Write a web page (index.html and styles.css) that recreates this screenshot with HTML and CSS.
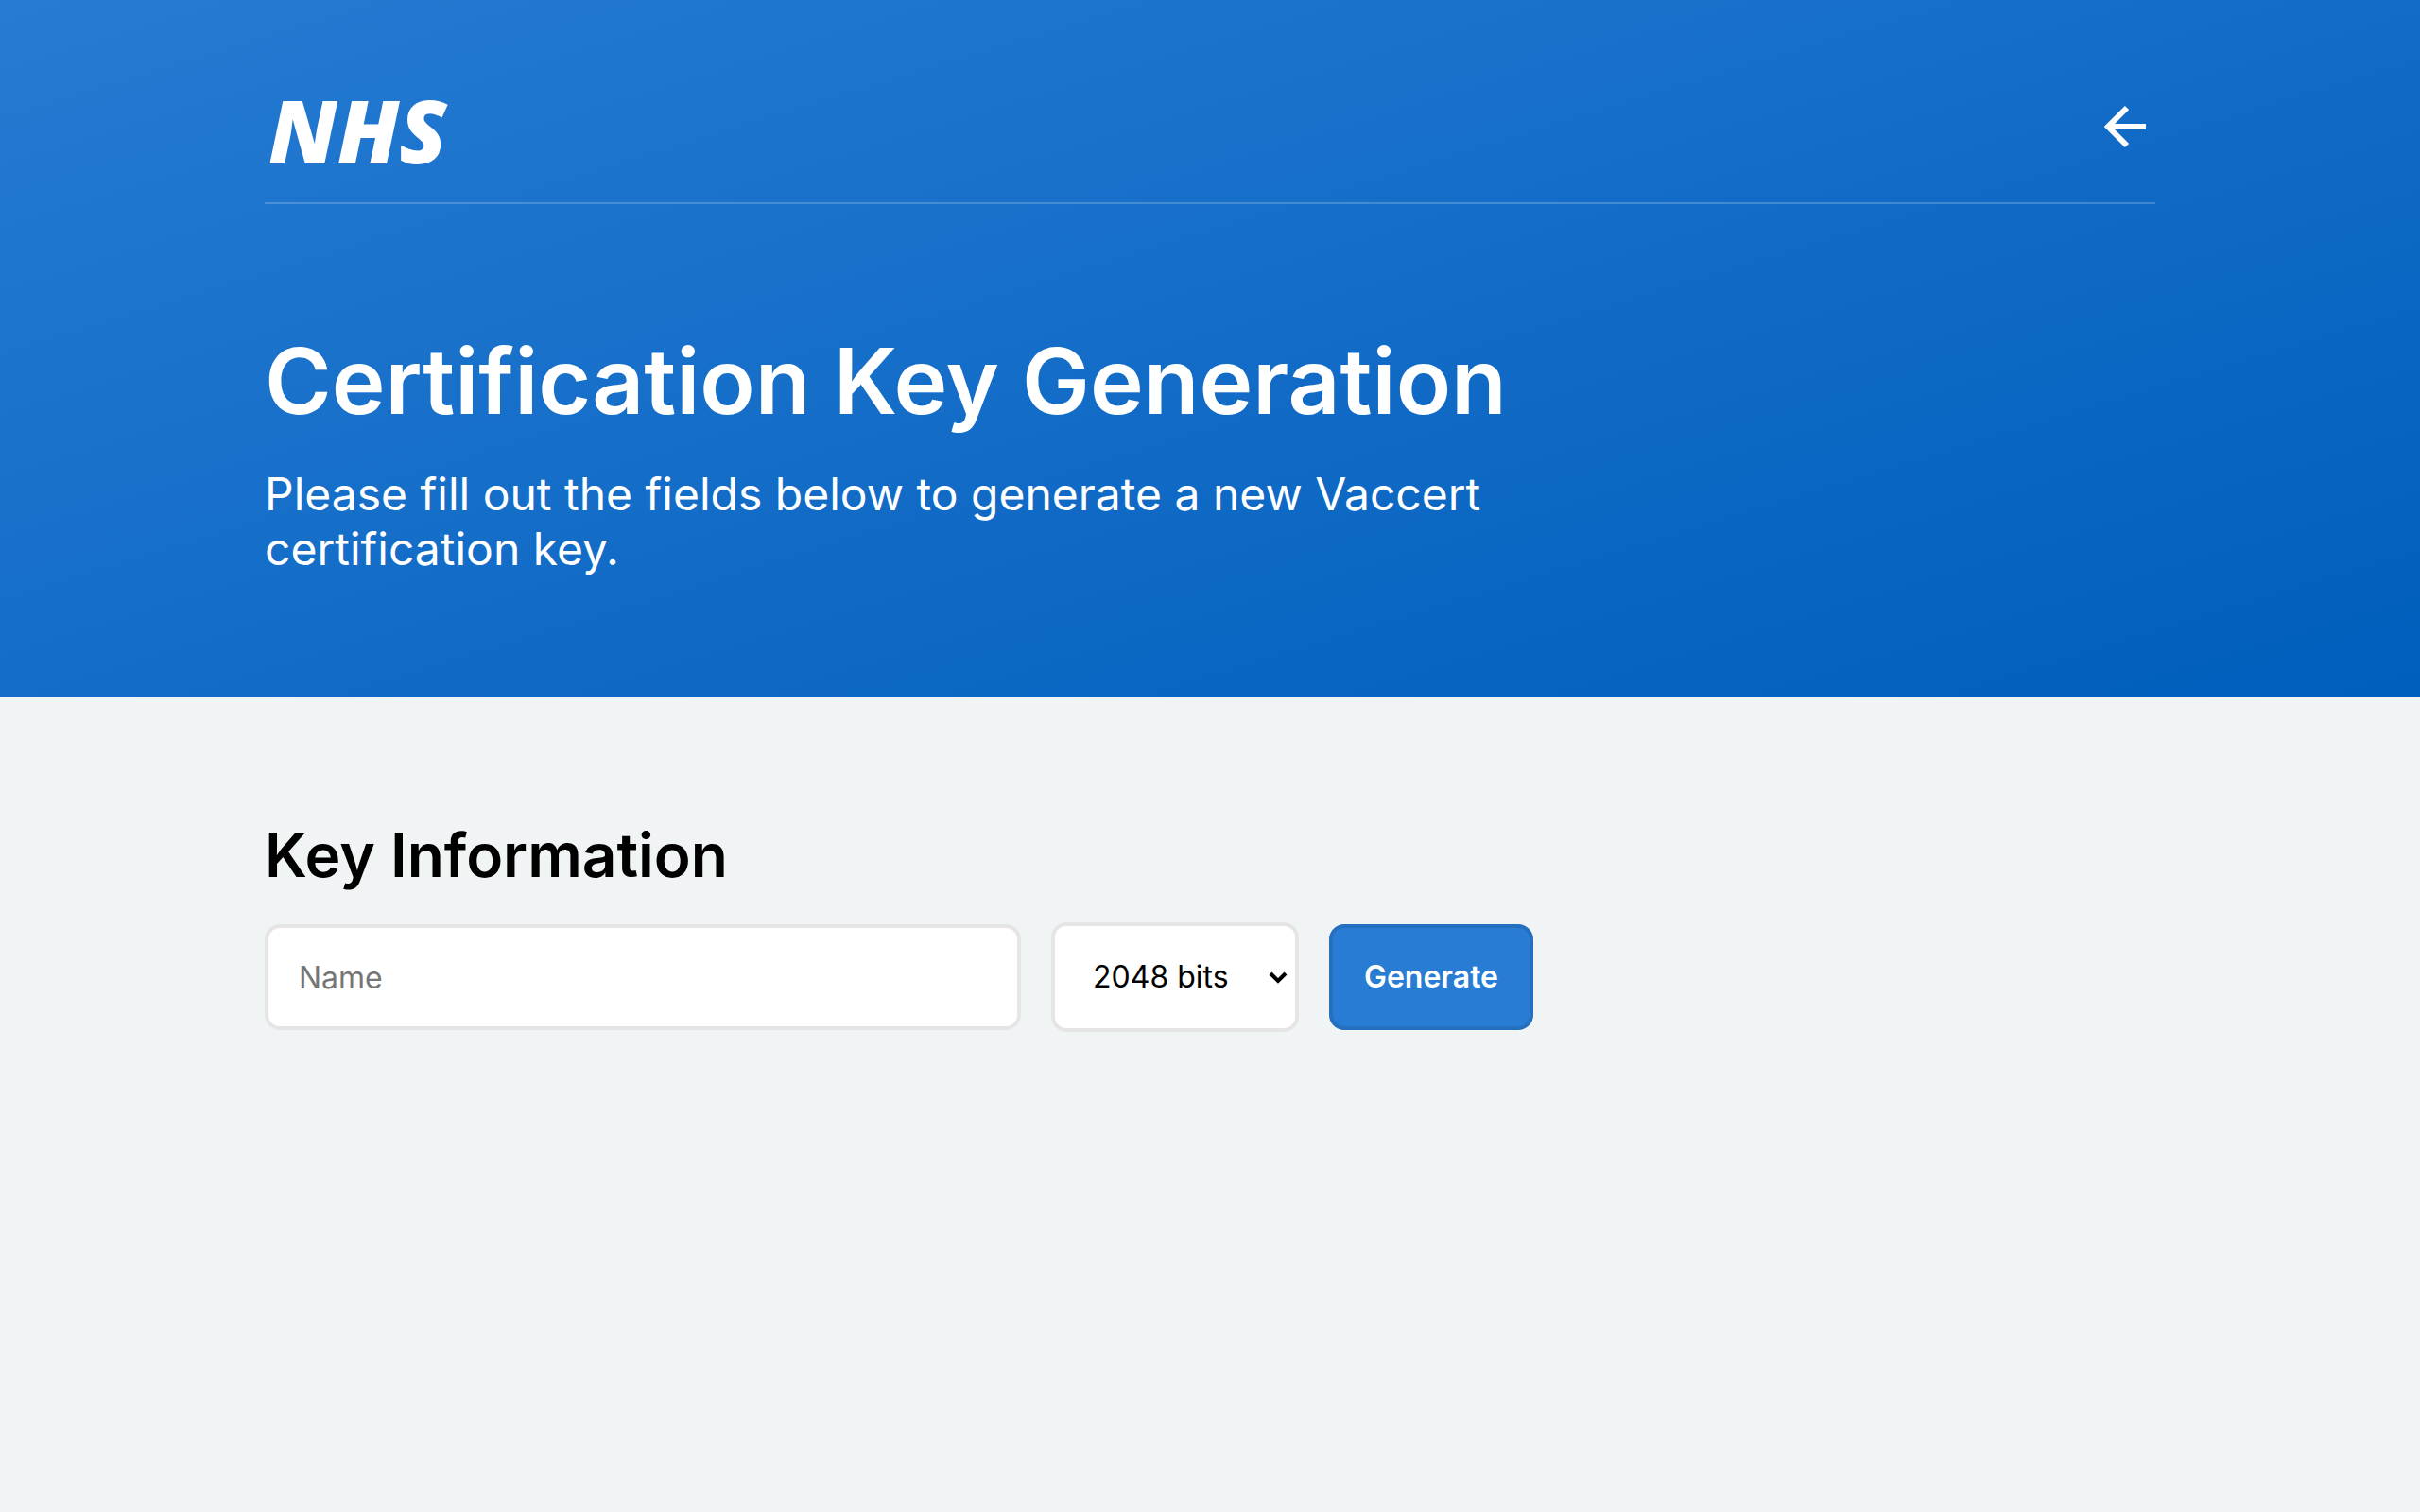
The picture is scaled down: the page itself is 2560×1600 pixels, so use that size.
FILE: index.html
```html
<!DOCTYPE html>
<html lang="en">
<head>
<meta charset="utf-8">
<meta name="viewport" content="width=device-width, initial-scale=1">
<title>Certification Key Generation</title>
<link rel="stylesheet" href="styles.css">
</head>
<body>
<header class="hero">
  <div class="container">
    <nav class="navbar">
      <a class="logo" href="#">NHS</a>
      <a class="back" href="#" aria-label="Back">
        <svg class="back-icon" viewBox="0 0 64 64" aria-hidden="true">
          <path d="M54 32H14M34 12L14 32L34 52"/>
        </svg>
      </a>
    </nav>
    <div class="intro">
      <h1 class="title">Certification Key Generation</h1>
      <p class="lead">Please fill out the fields below to generate a new Vaccert certification key.</p>
    </div>
  </div>
</header>
<main class="container content">
  <h2 class="section-title">Key Information</h2>
  <form class="key-form">
    <input class="field name-field" type="text" placeholder="Name" aria-label="Name">
    <select class="field size-field" aria-label="Key size">
      <option>2048 bits</option>
      <option>4096 bits</option>
    </select>
    <button class="submit" type="button">Generate</button>
  </form>
</main>
</body>
</html>
```

FILE: styles.css
```css
* {
  box-sizing: border-box;
}

body {
  margin: 0;
  background: #f0f4f5;
  color: #000;
  font-family: Inter, sans-serif;
}

.container {
  max-width: 2000px;
  margin: 0 auto;
}

.hero {
  padding: 80px 0 128px;
  background: linear-gradient(163deg, #267bd2, #005ebc);
  color: #fff;
}

.navbar {
  display: flex;
  justify-content: space-between;
  align-items: flex-end;
  height: 136px;
  padding: 0 0 24px 4px;
  border-bottom: 2px solid rgba(255, 255, 255, 0.2);
}

.logo {
  padding-bottom: 6px;
  color: #fff;
  font: italic 800 92px/1 "Open Sans", sans-serif;
  text-decoration: none;
}

.back {
  display: block;
  padding-bottom: 24px;
}

.back-icon {
  display: block;
  width: 64px;
  height: 64px;
  fill: none;
  stroke: #fff;
  stroke-width: 6;
}

.intro {
  max-width: 1320px;
  padding-top: 128px;
}

.title {
  margin: 0 0 32px;
  font-size: 96px;
  font-weight: 600;
  line-height: 118px;
}

.lead {
  margin: 0;
  font-size: 48px;
  line-height: 58px;
}

.content {
  padding: 128px 0;
}

.section-title {
  margin: 0 0 32px;
  font-size: 64px;
  font-weight: 600;
  line-height: 78px;
}

.key-form {
  display: flex;
  align-items: center;
  gap: 32px;
}

.field {
  border: 4px solid #e5e5e5;
  border-radius: 16px;
  background: #fff;
  color: #000;
  font: 400 32px/40px Inter, sans-serif;
}

.name-field {
  width: 800px;
  height: 112px;
  padding: 0 32px;
}

.name-field::placeholder {
  color: #757575;
}

.size-field {
  width: 262px;
  height: 116px;
  padding: 0 0 0 40px;
  appearance: none;
  background: #fff url("data:image/svg+xml,%3Csvg xmlns='http://www.w3.org/2000/svg' viewBox='0 0 20 14'%3E%3Cpath d='M2 3L10 11L18 3' fill='none' stroke='black' stroke-width='4'/%3E%3C/svg%3E") right 8px center / 20px 14px no-repeat;
}

.submit {
  width: 216px;
  height: 112px;
  padding: 0;
  border: 4px solid #2470bf;
  border-radius: 16px;
  background: #287cd3;
  color: #fff;
  font: 600 32px/40px Inter, sans-serif;
}
```
